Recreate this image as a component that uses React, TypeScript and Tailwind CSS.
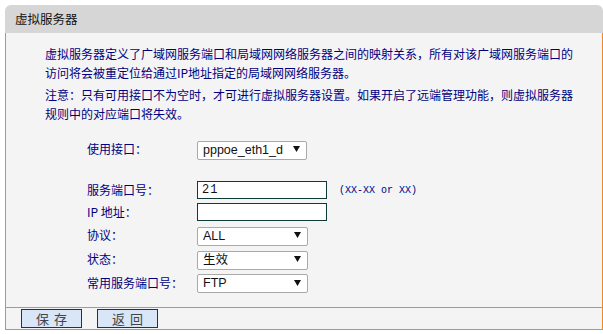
import { useState } from "react";

const cjk = { fontFamily: '"Noto Sans CJK SC", "Liberation Sans", sans-serif' };
const latin = { fontFamily: '"Liberation Sans", "Noto Sans CJK SC", sans-serif' };
const mono = { fontFamily: '"Liberation Mono", monospace' };

const selectOptions = {
  iface: ["pppoe_eth1_d"],
  proto: ["ALL", "TCP", "UDP"],
  status: ["生效", "失效"],
  service: ["FTP", "HTTP", "TELNET", "SMTP", "DNS"],
};

function Arrow() {
  return (
    <svg width="7" height="6" viewBox="0 0 7 6" className="pointer-events-none absolute right-[7px] top-1/2 -translate-y-1/2">
      <polygon points="0,0 7,0 3.5,6" fill="#111" />
    </svg>
  );
}

function FakeSelect({ value, options, width, onChange }: { value: string; options: string[]; width: string; onChange: (v: string) => void }) {
  return (
    <div className={`relative h-[19px] ${width}`}>
      <select
        value={value}
        onChange={(e) => onChange(e.target.value)}
        className="h-full w-full appearance-none rounded-[2px] border border-[#a9a9a9] bg-white pl-[5px] text-[12.5px] leading-[17px] text-[#111] outline-none"
        style={latin}
      >
        {options.map((o) => (
          <option key={o}>{o}</option>
        ))}
      </select>
      <Arrow />
    </div>
  );
}

export default function App() {
  const [iface, setIface] = useState("pppoe_eth1_d");
  const [proto, setProto] = useState("ALL");
  const [status, setStatus] = useState("生效");
  const [service, setService] = useState("FTP");
  const [port, setPort] = useState("21");
  const [ip, setIp] = useState("");

  return (
    <div className="h-[334px] w-[603px] bg-white pl-[5px] pt-[5px]" style={cjk}>
      <div className="w-[598px]">
        {/* Header */}
        <div className="flex h-[28px] items-center rounded-tl-[6px] rounded-tr-[6px] bg-[#d6d6d6] pl-[10px] text-[12.5px] text-[#111]">
          虚拟服务器
        </div>

        {/* Body */}
        <div className="h-[275px] border-x border-b border-[#ec8a24] bg-[#f4f4f4]">
          <div className="w-[573px] pl-[39px] pt-[11px] text-[12px] leading-[19px] text-[#000080]">
            <p>虚拟服务器定义了广域网服务端口和局域网网络服务器之间的映射关系，所有对该广域网服务端口的访问将会被重定位给通过IP地址指定的局域网网络服务器。</p>
            <p className="mt-[3px]">注意：只有可用接口不为空时，才可进行虚拟服务器设置。如果开启了远端管理功能，则虚拟服务器规则中的对应端口将失效。</p>
          </div>

          <div className="mt-[16px] pl-[81px] text-[12px] text-[#000080]">
            <div className="flex h-[20px] items-center">
              <span className="w-[110px]">使用接口：</span>
              <FakeSelect value={iface} options={selectOptions.iface} width="w-[110px]" onChange={setIface} />
            </div>

            <div className="mt-[20px] flex h-[22px] items-center">
              <span className="w-[110px]">服务端口号：</span>
              <input
                value={port}
                onChange={(e) => setPort(e.target.value)}
                className="h-[18px] w-[130px] border border-[#0e3a3a] bg-white px-[4px] text-[12px] tracking-[1px] text-[#111] outline-none"
                style={mono}
              />
              <span className="ml-[12px] text-[10px] text-[#000080]" style={mono}>
                (XX-XX or XX)
              </span>
            </div>

            <div className="flex h-[22px] items-center">
              <span className="w-[110px]">IP 地址：</span>
              <input
                value={ip}
                onChange={(e) => setIp(e.target.value)}
                className="h-[18px] w-[130px] border border-[#0e3a3a] bg-white px-[4px] text-[12px] text-[#111] outline-none"
              />
            </div>

            <div className="flex h-[24px] items-center">
              <span className="w-[110px]">协议：</span>
              <FakeSelect value={proto} options={selectOptions.proto} width="w-[111px]" onChange={setProto} />
            </div>
            <div className="flex h-[24px] items-center">
              <span className="w-[110px]">状态：</span>
              <FakeSelect value={status} options={selectOptions.status} width="w-[111px]" onChange={setStatus} />
            </div>
            <div className="flex h-[23px] items-center">
              <span className="w-[110px]">常用服务端口号：</span>
              <FakeSelect value={service} options={selectOptions.service} width="w-[111px]" onChange={setService} />
            </div>
          </div>
        </div>

        {/* Buttons */}
        <div className="flex h-[22px] items-center gap-[15px] border-x border-b border-[#ec8a24] bg-[#f4f4f4] pl-[15px]">
          <button className="flex h-[19px] w-[61px] items-end justify-center border border-[#143c3c] bg-[#d8e6f8] pl-[5px] text-[13px] leading-[17px] tracking-[5px] text-[#444]">
            保存
          </button>
          <button className="flex h-[19px] w-[61px] items-end justify-center border border-[#143c3c] bg-[#d8e6f8] pl-[5px] text-[13px] leading-[17px] tracking-[5px] text-[#444]">
            返回
          </button>
        </div>
      </div>
    </div>
  );
}
